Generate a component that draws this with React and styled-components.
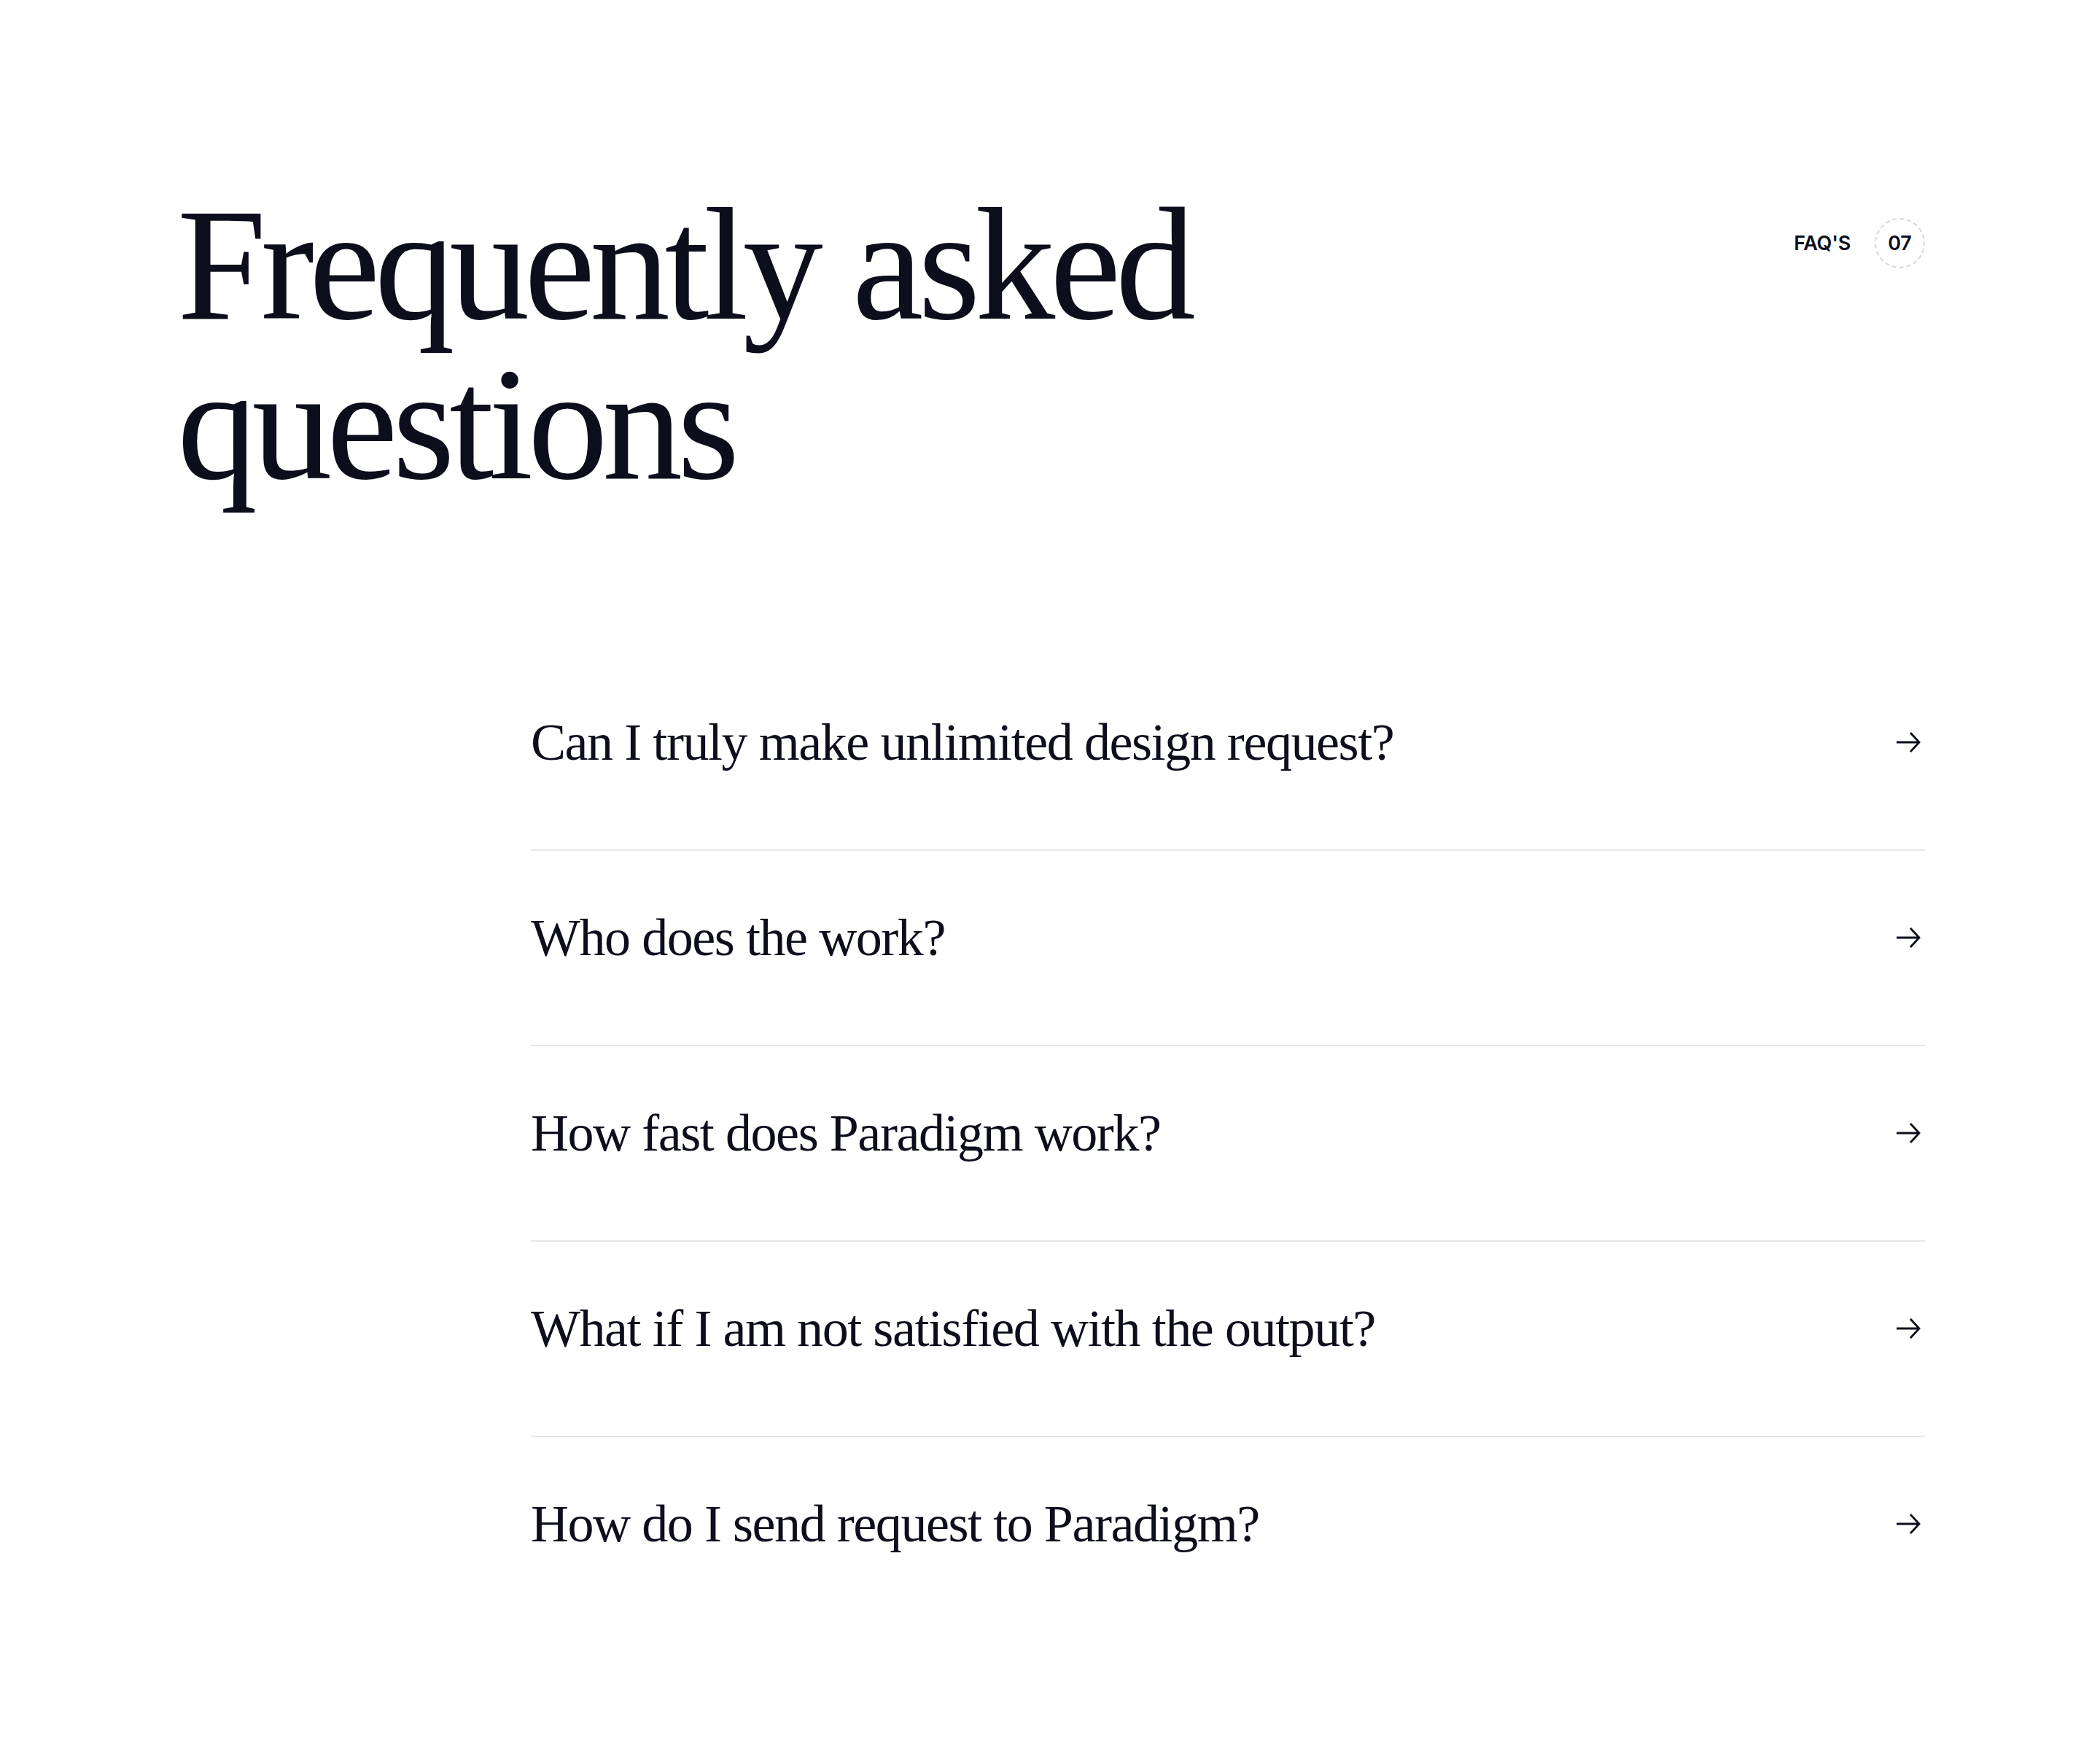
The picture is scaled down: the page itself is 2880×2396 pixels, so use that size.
import React from "react";
import styled, { createGlobalStyle } from "styled-components";

const faqs = [
  "Can I truly make unlimited design request?",
  "Who does the work?",
  "How fast does Paradigm work?",
  "What if I am not satisfied with the output?",
  "How do I send request to Paradigm?",
];

const GlobalStyle = createGlobalStyle`
  html, body {
    margin: 0;
    padding: 0;
    background: #ffffff;
  }
  * {
    box-sizing: border-box;
  }
`;

const Section = styled.section`
  padding: 254px 240px 160px 243px;
  color: #0d0e1c;
`;

const Header = styled.header`
  display: flex;
  justify-content: space-between;
  align-items: flex-start;
`;

const Title = styled.h1`
  margin: 0;
  font-family: "Liberation Serif", "Times New Roman", serif;
  font-weight: 400;
  font-size: 220px;
  line-height: 219px;
  letter-spacing: -0.034em;
  color: #0d0e1c;
`;

const Label = styled.div`
  display: flex;
  align-items: center;
  gap: 33px;
  margin-top: 45px;
  font-family: Inter, "Liberation Sans", sans-serif;
  font-weight: 600;
  font-size: 27px;
  letter-spacing: -0.01em;
  color: #0d0e1c;
`;

const Count = styled.span`
  width: 69px;
  height: 69px;
  border-radius: 50%;
  border: 2px dashed #d6d6d9;
  display: flex;
  align-items: center;
  justify-content: center;
`;

const List = styled.ul`
  list-style: none;
  margin: 207px 0 0 485px;
  padding: 0;
`;

const Row = styled.li`
  display: flex;
  align-items: center;
  justify-content: space-between;
  padding: 76px 0 104px;
  border-bottom: 2px solid ${(p) => (p.last ? "transparent" : "#e6e6e8")};
`;

const Question = styled.span`
  font-family: "Liberation Serif", "Times New Roman", serif;
  font-size: 72px;
  line-height: 86px;
  letter-spacing: -0.02em;
  color: #0d0e1c;
`;

const Arrow = () => (
  <svg width="40" height="40" viewBox="0 0 40 40" fill="none">
    <path
      d="M1 20H32M20 7L32 20L20 33"
      stroke="#0d0e1c"
      strokeWidth="2.8"
      strokeLinejoin="miter"
    />
  </svg>
);

export default function App() {
  return (
    <>
      <GlobalStyle />
      <Section>
        <Header>
          <Title>
            Frequently asked
            <br />
            questions
          </Title>
          <Label>
            <span>FAQ'S</span>
            <Count>07</Count>
          </Label>
        </Header>
        <List>
          {faqs.map((q, i) => (
            <Row key={q} last={i === faqs.length - 1}>
              <Question>{q}</Question>
              <Arrow />
            </Row>
          ))}
        </List>
      </Section>
    </>
  );
}
